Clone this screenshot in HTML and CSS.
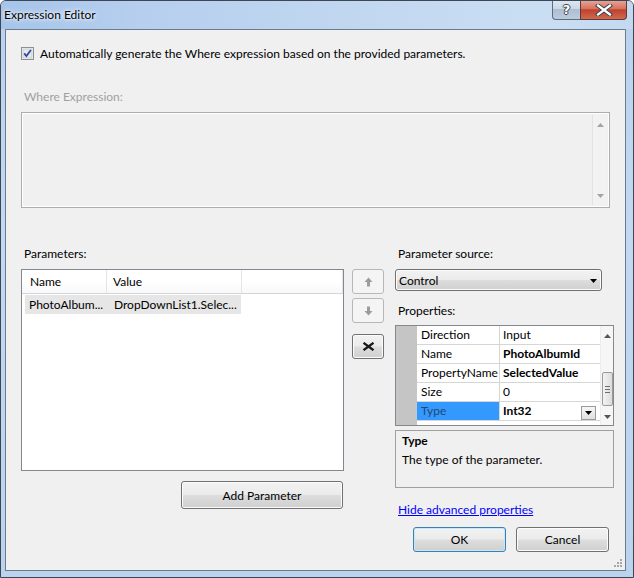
FILE: index.html
```html
<!DOCTYPE html>
<html>
<head>
<meta charset="utf-8">
<title>Expression Editor</title>
<link rel="stylesheet" href="styles.css">
</head>
<body>
<div class="window">
  <div class="titlebar">
    <span class="title">Expression Editor</span>
    <div class="caption-btns">
      <div class="cap-help"><span class="qmark">?</span></div>
      <div class="cap-close">
        <svg width="18" height="12" viewBox="0 0 18 12"><path d="M3 1.5 L15 10.5 M15 1.5 L3 10.5" stroke="#3b4652" stroke-width="4.2" stroke-linecap="square"/><path d="M3 1.5 L15 10.5 M15 1.5 L3 10.5" stroke="#ffffff" stroke-width="2.2" stroke-linecap="square"/></svg>
      </div>
    </div>
  </div>
  <div class="client">
    <div class="auto-row">
      <span class="checkbox">
        <svg width="13" height="13" viewBox="0 0 13 13"><rect x="0.5" y="0.5" width="12" height="12" fill="#f4f4f4" stroke="#8e8f8f"/><rect x="2" y="2" width="9" height="9" fill="#e6e8ec" stroke="#b8bcc4" stroke-width="0.6"/><path d="M3.2 6.4 L5.4 9 L9.9 3" fill="none" stroke="#2c4a9e" stroke-width="1.8"/></svg>
      </span>
      <span>Automatically generate the Where expression based on the provided parameters.</span>
    </div>
    <div class="where-label">Where Expression:</div>
    <div class="where-box">
      <div class="vscroll">
        <svg width="7" height="4" viewBox="0 0 7 4"><path d="M3.5 0 L7 4 H0 Z" fill="#a3a3a3"/></svg>
        <svg width="7" height="4" viewBox="0 0 7 4"><path d="M0 0 H7 L3.5 4 Z" fill="#a3a3a3"/></svg>
      </div>
    </div>
    <div class="bottom">
      <div class="left-col">
        <div class="label">Parameters:</div>
        <div class="listview">
          <div class="lv-header">
            <div class="hcol h-name">Name</div>
            <div class="hcol h-value">Value</div>
            <div class="hcol h-fill"></div>
          </div>
          <div class="lv-row">
            <div class="cell c-name">PhotoAlbum...</div>
            <div class="cell c-value">DropDownList1.Selec...</div>
          </div>
        </div>
        <div class="add-row"><div class="btn add-btn">Add Parameter</div></div>
      </div>
      <div class="mid-col">
        <div class="sbtn disabled">
          <svg width="9" height="10" viewBox="0 0 9 10"><path d="M4.5 0.5 L8.5 5 H6 V9.5 H3 V5 H0.5 Z" fill="#9c9c9c"/></svg>
        </div>
        <div class="sbtn disabled down">
          <svg width="9" height="10" viewBox="0 0 9 10"><path d="M4.5 9.5 L8.5 5 H6 V0.5 H3 V5 H0.5 Z" fill="#9c9c9c"/></svg>
        </div>
        <div class="sbtn btn del">
          <svg width="13" height="9" viewBox="0 0 13 9"><path d="M1.5 0.8 L11.5 8.2 M11.5 0.8 L1.5 8.2" stroke="#1a1a1a" stroke-width="2.3"/></svg>
        </div>
      </div>
      <div class="right-col">
        <div class="label">Parameter source:</div>
        <div class="btn combo">
          <span>Control</span>
          <svg width="7" height="4" viewBox="0 0 7 4"><path d="M0 0 H7 L3.5 4 Z" fill="#000"/></svg>
        </div>
        <div class="label props-label">Properties:</div>
        <div class="pgrid">
          <div class="pg-margin"></div>
          <div class="pg-rows">
            <div class="pg-row"><div class="pg-name">Direction</div><div class="pg-value">Input</div></div>
            <div class="pg-row"><div class="pg-name">Name</div><div class="pg-value bold">PhotoAlbumId</div></div>
            <div class="pg-row"><div class="pg-name">PropertyName</div><div class="pg-value bold">SelectedValue</div></div>
            <div class="pg-row"><div class="pg-name">Size</div><div class="pg-value">0</div></div>
            <div class="pg-row"><div class="pg-name selected">Type</div><div class="pg-value bold has-drop"><span>Int32</span><span class="pg-drop"><svg width="7" height="4" viewBox="0 0 7 4"><path d="M0 0 H7 L3.5 4 Z" fill="#000"/></svg></span></div></div>
          </div>
          <div class="pg-scroll">
            <svg class="arr" width="7" height="4" viewBox="0 0 7 4"><path d="M3.5 0 L7 4 H0 Z" fill="#555"/></svg>
            <div class="thumb"><i></i><i></i><i></i></div>
            <svg class="arr" width="7" height="4" viewBox="0 0 7 4"><path d="M0 0 H7 L3.5 4 Z" fill="#555"/></svg>
          </div>
        </div>
        <div class="desc">
          <div class="desc-title">Type</div>
          <div class="desc-text">The type of the parameter.</div>
        </div>
        <div class="link-row"><a class="link" href="#">Hide advanced properties</a></div>
        <div class="dlg-btns">
          <div class="btn ok">OK</div>
          <div class="btn cancel">Cancel</div>
        </div>
      </div>
    </div>
    <svg class="grip" width="9" height="9" viewBox="0 0 9 9"><g fill="#a8a8a8"><rect x="7" y="1" width="2" height="2"/><rect x="4" y="4" width="2" height="2"/><rect x="7" y="4" width="2" height="2"/><rect x="1" y="7" width="2" height="2"/><rect x="4" y="7" width="2" height="2"/><rect x="7" y="7" width="2" height="2"/></g></svg>
  </div>
</div>
</body>
</html>
```

FILE: styles.css
```css
* { box-sizing: border-box; }
body {
  margin: 0;
  font-family: "Lato", "Segoe UI", sans-serif;
  font-size: 12px;
  color: #000;
  background: #ffffff;
}
.window {
  width: 634px;
  height: 578px;
  border: 1px solid #3c4654;
  border-radius: 6px 6px 0 0;
  background: linear-gradient(180deg, #b9d2ee 0%, #c3d9f1 40%, #bcd3ee 100%);
  display: flex;
  flex-direction: column;
  position: relative;
  overflow: hidden;
}
.titlebar {
  height: 28px;
  display: flex;
  justify-content: space-between;
  align-items: flex-start;
  background: linear-gradient(90deg, #a6c4ea 0%, #b6cfee 22%, #c1d7f0 55%, #cadef3 85%, #c4d9f1 100%);
}
.title {
  padding-left: 3px;
  margin-top: 6px;
  line-height: 16px;
  text-shadow: 0 0 6px #ffffff, 0 0 3px #ffffff;
}
.caption-btns {
  display: flex;
  margin-right: 6px;
  margin-top: -1px;
}
.cap-help {
  width: 28px;
  height: 20px;
  border: 1px solid #5f6c7b;
  border-top: none;
  border-right: none;
  border-radius: 0 0 0 4px;
  background: linear-gradient(180deg, #dfe8f2 0%, #cbd8e6 45%, #aebfd3 50%, #bccbdc 100%);
  display: flex;
  justify-content: center;
  align-items: center;
}
.qmark {
  font-family: "DejaVu Sans", sans-serif;
  font-weight: bold;
  font-size: 13px;
  color: #ffffff;
  text-shadow: -1px 0 #3b4652, 1px 0 #3b4652, 0 -1px #3b4652, 0 1px #3b4652;
}
.cap-close {
  width: 47px;
  height: 20px;
  border: 1px solid #5f3a36;
  border-top: none;
  border-radius: 0 0 4px 0;
  background: linear-gradient(180deg, #e8a99c 0%, #d7735f 45%, #c1412c 52%, #d06a52 100%);
  display: flex;
  justify-content: center;
  align-items: center;
}
.client {
  margin-left: 4px;
  width: 621px;
  height: 542px;
  border: 1px solid #6a7b8d;
  background: #f0f0f0;
  padding: 0 11px 0 15px;
  position: relative;
}
.auto-row {
  margin-top: 17px;
  height: 13px;
  display: flex;
  align-items: center;
  gap: 6px;
}
.checkbox { display: block; width: 13px; height: 13px; }
.checkbox svg { display: block; }
.where-label {
  margin-top: 29px;
  line-height: 16px;
  padding-left: 3px;
  color: #a0a0a0;
}
.where-box {
  margin-top: 7px;
  margin-right: 4px;
  height: 96px;
  border: 1px solid #adadad;
  box-shadow: inset 0 0 0 1px #ffffff;
  background: #f0f0f0;
  display: flex;
  justify-content: flex-end;
}
.vscroll {
  width: 15px;
  margin: 2px 2px 2px 0;
  border-left: 1px solid #e3e3e3;
  background: #f2f2f2;
  display: flex;
  flex-direction: column;
  justify-content: space-between;
  align-items: center;
  padding: 8px 0 7px;
}
.vscroll svg { display: block; }
.bottom {
  margin-top: 38px;
  display: flex;
  align-items: flex-start;
}
.label { line-height: 16px; padding-left: 3px; }
.left-col { width: 323px; }
.listview {
  margin-top: 7px;
  height: 202px;
  border: 1px solid #828790;
  background: #ffffff;
}
.lv-header {
  height: 24px;
  display: flex;
  background: linear-gradient(180deg, #ffffff 0%, #ffffff 50%, #f7f8f9 100%);
  border-bottom: 1px solid #d5d5d5;
}
.hcol {
  line-height: 23px;
  border-right: 1px solid #e5e5e5;
}
.h-name { width: 85px; padding-left: 8px; }
.h-value { width: 135px; padding-left: 6px; }
.h-fill { width: 101px; }
.lv-row {
  margin-top: 1px;
  margin-left: 3px;
  width: 216px;
  height: 19px;
  display: flex;
  background: #e6e6e6;
}
.cell { line-height: 19px; white-space: nowrap; }
.c-name { width: 82px; padding-left: 4px; }
.c-value { width: 134px; padding-left: 7px; }
.add-row {
  margin-top: 10px;
  display: flex;
  justify-content: flex-end;
}
.btn {
  border: 1px solid #707070;
  border-radius: 3px;
  background: linear-gradient(180deg, #f2f2f2 0%, #ebebeb 48%, #dddddd 52%, #cfcfcf 100%);
  box-shadow: inset 0 0 0 1px #fcfcfc;
  display: flex;
  justify-content: center;
  align-items: center;
}
.add-btn {
  width: 162px;
  height: 28px;
  margin-right: 1px;
}
.mid-col {
  width: 32px;
  margin-left: 8px;
  padding-top: 23px;
  display: flex;
  flex-direction: column;
}
.sbtn {
  width: 32px;
  height: 25px;
  display: flex;
  justify-content: center;
  align-items: center;
}
.sbtn.disabled {
  border: 1px solid #b5b9bc;
  border-radius: 3px;
  background: #f4f4f4;
}
.sbtn.down { margin-top: 4px; }
.sbtn.del { margin-top: 11px; }
.sbtn svg { display: block; }
.right-col {
  width: 219px;
  margin-left: 11px;
  display: flex;
  flex-direction: column;
}
.combo {
  margin-top: 7px;
  width: 207px;
  height: 22px;
  justify-content: space-between;
  padding: 0 4px 0 3px;
}
.combo svg { display: block; margin-top: 1px; }
.props-label { margin-top: 12px; }
.pgrid {
  margin-top: 6px;
  height: 101px;
  border: 1px solid #828790;
  background: #ffffff;
  display: flex;
}
.pg-margin { width: 21px; background: #c5c5c5; }
.pg-rows {
  width: 183px;
  display: flex;
  flex-direction: column;
}
.pg-row {
  height: 19px;
  display: flex;
  border-bottom: 1px solid #d6d6d6;
}
.pg-name {
  width: 83px;
  padding-left: 4px;
  line-height: 18px;
  border-right: 1px solid #d6d6d6;
  white-space: nowrap;
}
.pg-name.selected { background: #3399ff; color: #25476d; }
.pg-value {
  flex: 1;
  padding-left: 3px;
  line-height: 18px;
  white-space: nowrap;
}
.bold { font-weight: bold; }
.has-drop {
  display: flex;
  justify-content: space-between;
  align-items: flex-end;
  padding-right: 4px;
}
.has-drop span:first-child { align-self: center; }
.pg-drop {
  width: 15px;
  height: 14px;
  border: 1px solid #9a9a9a;
  background: linear-gradient(180deg, #f6f6f6, #e0e0e0);
  display: flex;
  justify-content: center;
  align-items: center;
  margin-bottom: 0;
}
.pg-drop svg { display: block; }
.pg-scroll {
  width: 13px;
  background: #f6f6f6;
  border-left: 1px solid #ededed;
  display: flex;
  flex-direction: column;
  align-items: center;
  padding: 8px 0 6px;
}
.pg-scroll .arr { display: block; }
.thumb {
  margin-top: 34px;
  width: 11px;
  height: 34px;
  border: 1px solid #9a9a9a;
  border-radius: 2px;
  background: linear-gradient(90deg, #f3f3f3, #dcdcdc);
  display: flex;
  flex-direction: column;
  justify-content: center;
  align-items: center;
  gap: 2px;
}
.thumb i { display: block; width: 5px; height: 1px; background: #6e6e6e; }
.pg-scroll .arr:last-child { margin-top: auto; }
.desc {
  margin-top: 4px;
  height: 58px;
  border: 1px solid #a0a0a0;
  background: #f0f0f0;
  padding: 2px 0 0 6px;
}
.desc-title { font-weight: bold; line-height: 16px; }
.desc-text { margin-top: 3px; line-height: 16px; }
.link-row { margin-top: 14px; line-height: 16px; padding-left: 3px; }
.link { color: #0000ff; text-decoration: underline; }
.dlg-btns {
  margin-top: 9px;
  display: flex;
  justify-content: flex-end;
  gap: 10px;
  padding-right: 5px;
}
.dlg-btns .btn { width: 93px; height: 25px; }
.ok {
  border-color: #3c7fb1 !important;
  box-shadow: inset 0 0 0 1px #c4e8fa !important;
}
.grip { position: absolute; right: 3px; bottom: 3px; display: block; }
```
